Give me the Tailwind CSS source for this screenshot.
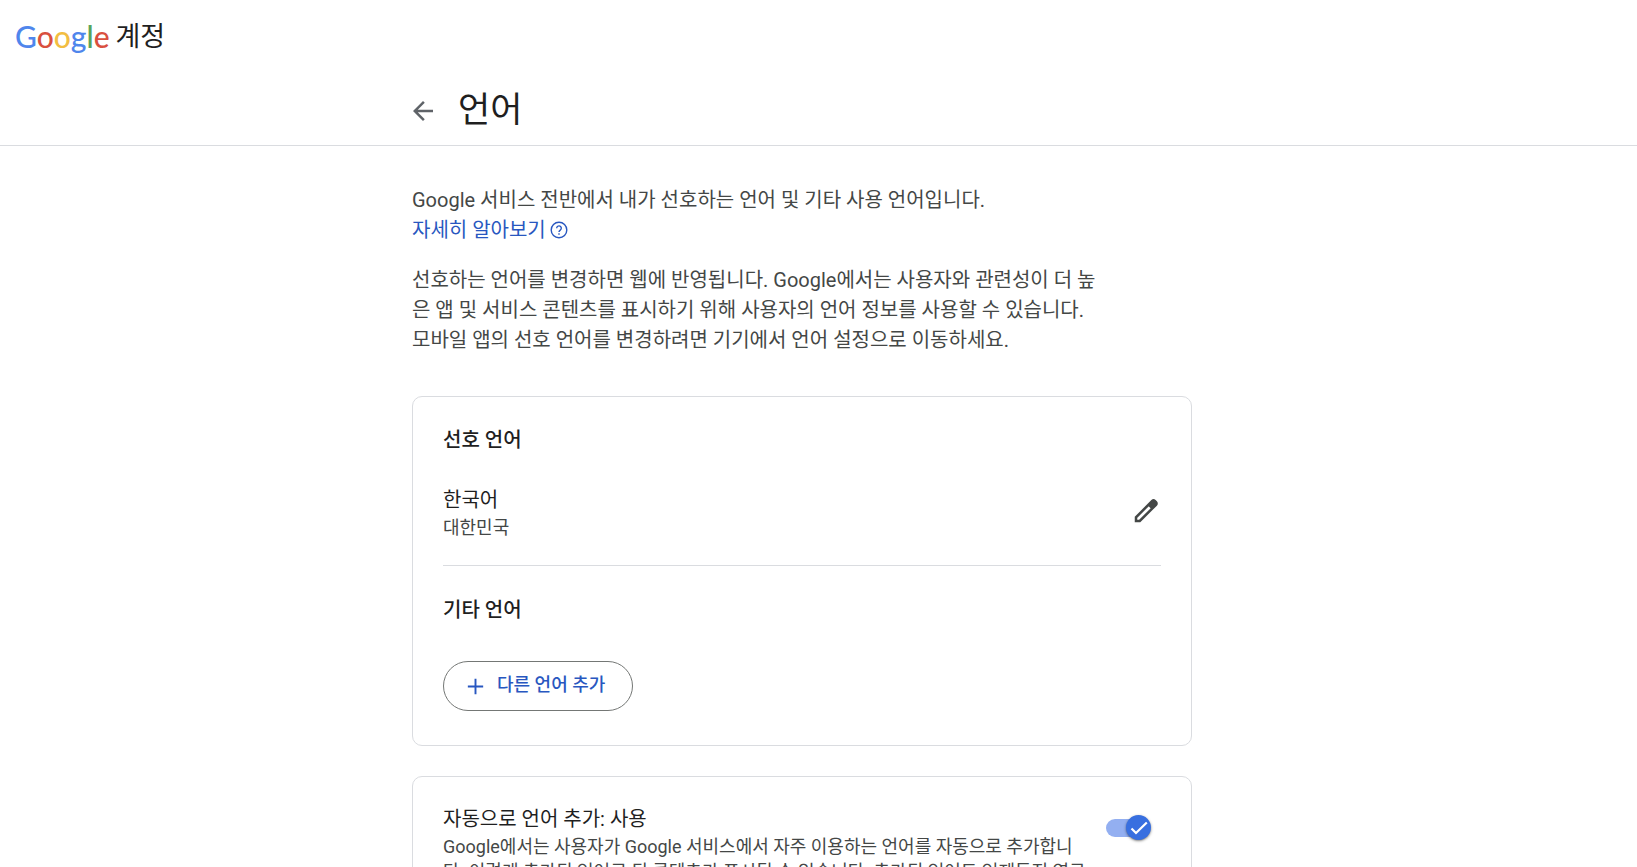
<!DOCTYPE html>
<html lang="ko">
<head>
	<meta charset="UTF-8">
	<meta name="viewport" content="width=device-width, initial-scale=1.0">
	<title>언어</title>
	<script src="https://cdn.jsdelivr.net/npm/@tailwindcss/browser@4"></script>
</head>
<body class="bg-white text-[#1f1f1f] font-['Roboto','Noto_Sans_CJK_KR',sans-serif] overflow-x-hidden">
	<!-- header starts -->
	<header class="border-b border-[#dadce0]">
		<div class="px-[15px] pt-4">
			<a href="#" class="inline-flex items-center gap-1.5 h-10" aria-label="Google 계정">
				<span class="font-['Lato',sans-serif] text-[30px] leading-10 font-medium"><span class="text-[#4f86ec]">G</span><span class="text-[#d9503f]">o</span><span class="text-[#f2bd42]">o</span><span class="text-[#4f86ec]">g</span><span class="text-[#58a55c]">l</span><span class="text-[#d9503f]">e</span></span>
				<span class="font-['Noto_Sans_CJK_KR',sans-serif] text-[27px] leading-[38px] pb-0.5">계정</span>
			</a>
		</div>
		<div class="pr-[33px]">
			<div class="max-w-[780px] mx-auto flex items-center gap-5 pt-[30px] pb-[9px]">
				<button type="button" aria-label="뒤로" class="-ml-1 text-[#5f6368]">
					<svg class="size-[30px]" viewBox="0 0 24 24" fill="currentColor"><path d="M20 11H7.83l5.59-5.59L12 4l-8 8 8 8 1.41-1.41L7.83 13H20v-2z"/></svg>
				</button>
				<h1 class="text-[35px] leading-[50px]">언어</h1>
			</div>
		</div>
	</header>
	<!-- header ends -->

	<main class="pr-[33px]">
		<div class="max-w-[780px] mx-auto pt-[39px]">
			<div class="max-w-[696px] text-xl leading-[30px] text-[#444746]">
				<p>Google 서비스 전반에서 내가 선호하는 언어 및 기타 사용 언어입니다.<br>
					<a href="#" class="inline-flex items-center gap-1 text-[#2857c0]">자세히 알아보기
						<svg class="size-[18px]" viewBox="0 0 18 18" fill="none" stroke="currentColor" stroke-width="1.4"><circle cx="9" cy="9" r="7.8"/><path d="M6.7 7.2a2.3 2.3 0 1 1 3.7 1.8c-.8.6-1.4 1-1.4 2"/><path d="M9 12.3v1.5"/></svg>
					</a>
				</p>
				<p class="mt-5">선호하는 언어를 변경하면 웹에 반영됩니다. Google에서는 사용자와 관련성이 더 높은 앱 및 서비스 콘텐츠를 표시하기 위해 사용자의 언어 정보를 사용할 수 있습니다.<br>모바일 앱의 선호 언어를 변경하려면 기기에서 언어 설정으로 이동하세요.</p>
			</div>

			<!-- preferred and other languages -->
			<section class="mt-[41px] border border-[#dadce0] rounded-[10px] px-[30px] pt-7 pb-[34px]">
				<h2 class="text-xl leading-[30px] font-medium">선호 언어</h2>
				<div class="flex items-center justify-between pt-[30px] pb-6 border-b border-[#dadce0]">
					<div>
						<div class="text-xl leading-[30px]">한국어</div>
						<div class="text-lg leading-[26px] text-[#444746]">대한민국</div>
					</div>
					<button type="button" aria-label="언어 수정" class="mb-1 text-[#444746]">
						<svg class="size-[30px]" viewBox="0 0 24 24" fill="none" stroke="currentColor" stroke-width="2"><path d="M4 20v-3L17 4c.6-.6 1.4-.6 2 0l1 1c.6.6.6 1.4 0 2L7 20z"/><path fill="currentColor" stroke="none" d="M13.5 7.5l3-3 2-1 2 2-1 2-3 3z"/></svg>
					</button>
				</div>
				<h2 class="mt-[29px] text-xl leading-[30px] font-medium">기타 언어</h2>
				<button type="button" class="mt-9 h-[50px] pl-5 pr-[27px] flex items-center gap-2.5 border border-[#747775] rounded-full text-[#2857c0] text-lg font-medium">
					<svg class="size-[23px]" viewBox="0 0 24 24" fill="currentColor"><path d="M20 13h-7v7h-2v-7H4v-2h7V4h2v7h7z"/></svg>
					<span class="pb-0.5">다른 언어 추가</span>
				</button>
			</section>

			<!-- automatically added languages -->
			<section class="mt-[30px] border border-[#dadce0] rounded-[10px] px-[30px] py-[27px] flex justify-between">
				<div class="max-w-[645px]">
					<h2 id="auto-add" class="text-xl leading-[30px]">자동으로 언어 추가: 사용</h2>
					<p class="text-lg leading-[25px] text-[#444746]">Google에서는 사용자가 Google 서비스에서 자주 이용하는 언어를 자동으로 추가합니<br>다. 이렇게 추가된 언어로 된 콘텐츠가 표시될 수 있습니다. 추가된 언어도 언제든지 영구</p>
				</div>
				<label class="relative mt-[11px] mr-2.5 w-[45px] h-[25px] shrink-0 flex items-center">
					<input type="checkbox" role="switch" checked aria-labelledby="auto-add" class="appearance-none w-[42px] h-[18px] rounded-full bg-[#93aff1]">
					<span class="absolute right-0 top-0 size-[25px] rounded-full bg-[#386fe0] shadow-sm shadow-black/40 flex items-center justify-center">
						<svg class="size-5" viewBox="0 0 20 20" fill="none" stroke="white" stroke-width="2.2"><path d="M2.5 10.5l4.5 4.5L17.8 4.5"/></svg>
					</span>
				</label>
			</section>
		</div>
	</main>
</body>
</html>
